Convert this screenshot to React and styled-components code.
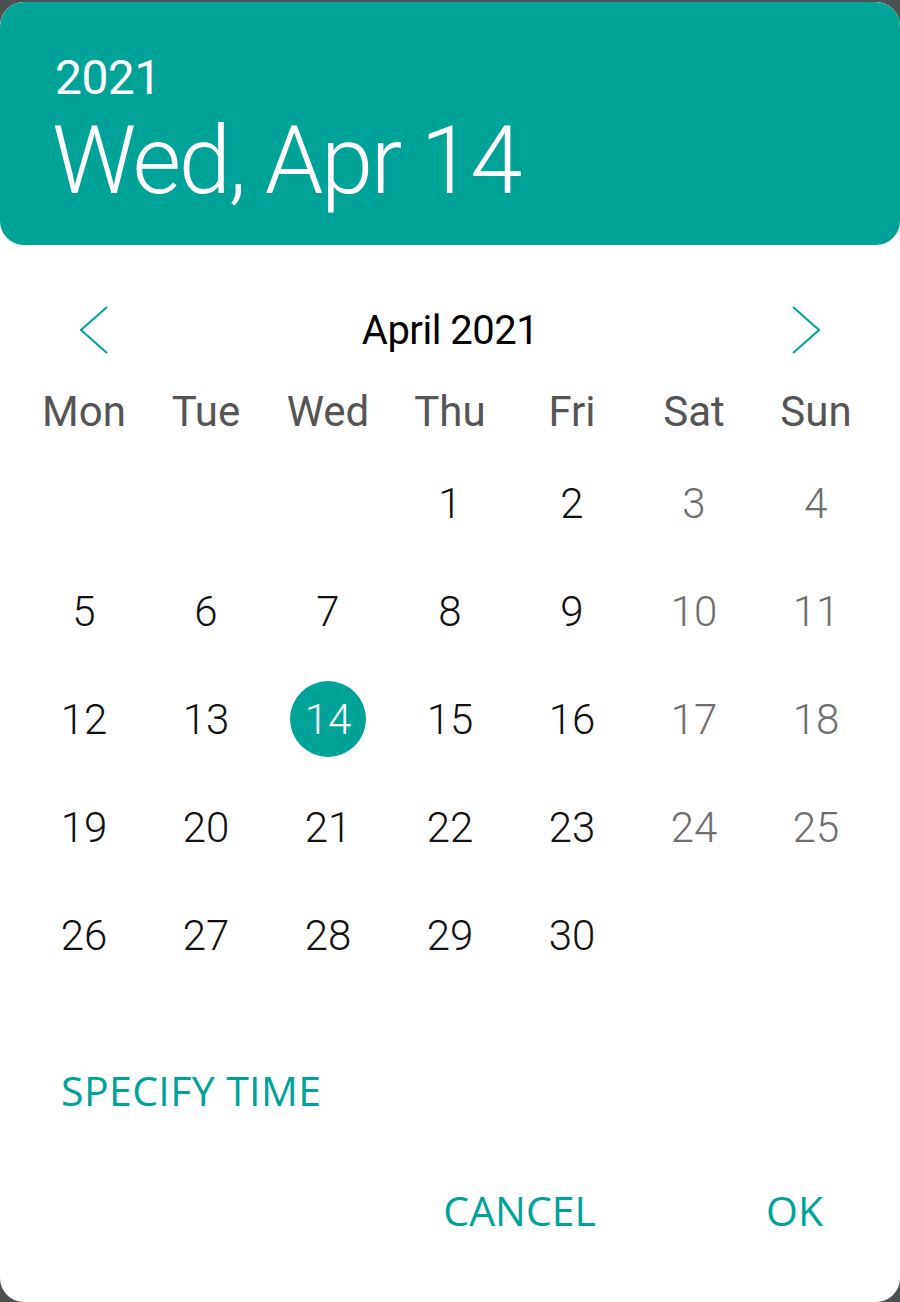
import React from "react";
import styled, { createGlobalStyle } from "styled-components";

const TEAL = "#00a398";

const GlobalStyle = createGlobalStyle`
  html, body {
    margin: 0;
    padding: 0;
    background: #4d5051;
  }
  body {
    font-family: Roboto, "Noto Sans", sans-serif;
  }
`;

const Dialog = styled.div`
  margin-top: 2px;
  width: 900px;
  height: 1300px;
  background: #ffffff;
  border-radius: 24px;
  overflow: hidden;
  display: flex;
  flex-direction: column;
`;

const Header = styled.div`
  height: 243px;
  box-sizing: border-box;
  padding: 52px 0 0 52px;
  background: ${TEAL};
  border-radius: 24px;
  color: #ffffff;
`;

const Year = styled.div`
  font-size: 48px;
  line-height: 48px;
  padding-left: 3px;
  letter-spacing: -0.6px;
`;

const BigDate = styled.div`
  margin-top: 12px;
  font-size: 94px;
  font-weight: 300;
  line-height: 94px;
  letter-spacing: -2.4px;
`;

const Nav = styled.div`
  margin-top: 42px;
  height: 86px;
  padding: 0 80px;
  display: flex;
  align-items: center;
  justify-content: space-between;
`;

const Month = styled.div`
  font-size: 40px;
  color: #000;
  letter-spacing: -0.5px;
`;

const Arrow = styled.svg`
  width: 28px;
  height: 48px;
  display: block;
`;

const Grid = styled.div`
  padding: 0 23px;
  display: grid;
  grid-template-columns: repeat(7, 1fr);
`;

const DayName = styled.div`
  height: 76px;
  display: flex;
  align-items: center;
  justify-content: center;
  font-size: 42px;
  color: #555;
`;

const Cell = styled.div`
  height: 108px;
  display: flex;
  align-items: center;
  justify-content: center;
`;

const Num = styled.div`
  width: 76px;
  height: 76px;
  border-radius: 50%;
  display: flex;
  align-items: center;
  justify-content: center;
  font-size: 42px;
  font-weight: 300;
  background: ${(p) => (p.$selected ? TEAL : "transparent")};
  color: ${(p) => (p.$selected ? "#fff" : p.$weekend ? "#6e6e6e" : "#111")};
`;

const TextButton = styled.div`
  font-family: "Open Sans", "Noto Sans", sans-serif;
  font-size: 41px;
  line-height: 80px;
  color: ${TEAL};
`;

const Specify = styled(TextButton)`
  margin-top: 61px;
  padding-left: 61px;
  letter-spacing: 0.4px;
`;

const Actions = styled.div`
  margin-top: 40px;
  padding-right: 77px;
  display: flex;
  justify-content: flex-end;
  gap: 170px;
`;

const days = ["Mon", "Tue", "Wed", "Thu", "Fri", "Sat", "Sun"];

const cells = [];
for (let i = 0; i < 3; i++) cells.push(null);
for (let d = 1; d <= 30; d++) cells.push(d);

export default function App() {
  return (
    <>
      <GlobalStyle />
      <Dialog>
        <Header>
          <Year>2021</Year>
          <BigDate>Wed, Apr 14</BigDate>
        </Header>
        <Nav>
          <Arrow viewBox="0 0 28 48">
            <polyline points="27,1 1,24 27,47" fill="none" stroke={TEAL} strokeWidth="2" />
          </Arrow>
          <Month>April 2021</Month>
          <Arrow viewBox="0 0 28 48">
            <polyline points="1,1 27,24 1,47" fill="none" stroke={TEAL} strokeWidth="2" />
          </Arrow>
        </Nav>
        <Grid>
          {days.map((d) => (
            <DayName key={d}>{d}</DayName>
          ))}
          {cells.map((d, i) => (
            <Cell key={i}>
              {d && (
                <Num $selected={d === 14} $weekend={i % 7 >= 5}>
                  {d}
                </Num>
              )}
            </Cell>
          ))}
        </Grid>
        <Specify>SPECIFY TIME</Specify>
        <Actions>
          <TextButton>CANCEL</TextButton>
          <TextButton>OK</TextButton>
        </Actions>
      </Dialog>
    </>
  );
}
